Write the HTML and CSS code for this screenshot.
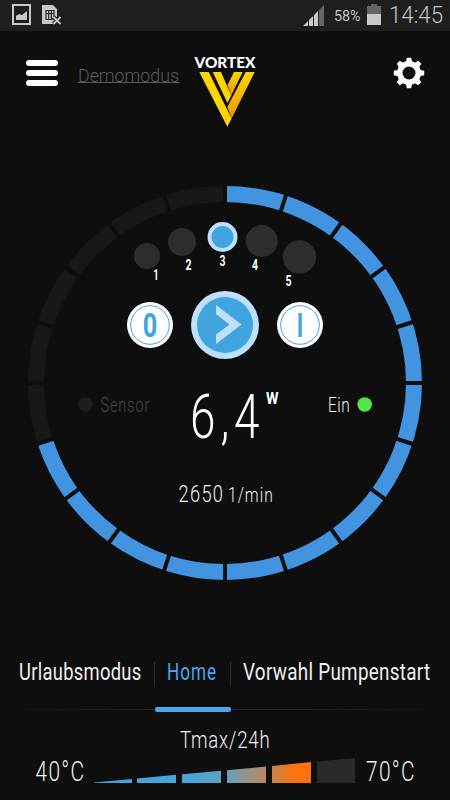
FILE: index.html
```html
<!DOCTYPE html>
<html lang="de">
<head>
<meta charset="utf-8">
<meta name="viewport" content="width=device-width, initial-scale=1">
<title>Vortex</title>
<link rel="stylesheet" href="styles.css">
</head>
<body>
<div class="app">
  <div class="statusbar">
    <div class="status-left">
      <svg width="19" height="21" viewBox="0 0 19 21"><rect x="1" y="1" width="17" height="19" fill="none" stroke="#c8c8c8" stroke-width="2"/><path d="M4 16v-4l3-2 3 1 5-4v9z" fill="#c8c8c8"/></svg>
      <svg width="20" height="21" viewBox="0 0 20 21"><path d="M0 1h11l4 4v8l-4 7H0z" fill="#c8c8c8"/><path d="M4 6.500h8v9H4zM4 9.500h8M6.700 6.500v9M9.400 6.500v9" fill="none" stroke="#2a2a2a" stroke-width="1.200"/><path d="M11.500 13l7 7M18.500 13l-7 7" stroke="#1e1e1e" stroke-width="4"/><path d="M11.500 13l7 7M18.500 13l-7 7" stroke="#c8c8c8" stroke-width="1.800"/></svg>
    </div>
    <div class="status-right">
      <svg width="22" height="21" viewBox="0 0 22 21"><path d="M0 21L5 16v5zM6 15l4-4v10H6zM11 10l4-4v15h-4z" fill="#c8c8c8"/><path d="M16 5l5-5v21h-5z" fill="#666"/></svg>
      <svg class="pct" width="28" height="16"><text x="0" y="13" font-size="14.500" textLength="26.500" lengthAdjust="spacingAndGlyphs">58%</text></svg>
      <svg class="battery" width="14" height="21" viewBox="0 0 14 21"><path d="M0 2h4V0h6v2h4v8H0z" fill="#666"/><path d="M0 10h14v11H0z" fill="#c8c8c8"/></svg>
      <svg class="clock" width="54" height="22"><text x="0" y="19" font-size="23.500" textLength="54" lengthAdjust="spacingAndGlyphs">14:45</text></svg>
    </div>
  </div>
  <header class="header">
    <svg class="menu" width="32" height="26" viewBox="0 0 32 26"><g fill="#fff"><rect width="32" height="6" rx="3"/><rect y="10" width="32" height="6" rx="3"/><rect y="20" width="32" height="6" rx="3"/></g></svg>
    <svg class="demo" width="102" height="24"><text x="0" y="17.500" font-size="18.500" textLength="101" lengthAdjust="spacingAndGlyphs">Demomodus</text><rect x="-.5" y="18" width="102" height="1"/></svg>
    <svg class="logo" width="64" height="72" viewBox="0 0 64 72">
      <defs><linearGradient id="gold" x1="0" y1="0" x2="0" y2="1"><stop offset="0" stop-color="#ffd400"/><stop offset="1" stop-color="#e39a00"/></linearGradient></defs>
      <text class="brand" x="1.500" y="12.500" font-size="15.500" textLength="61" lengthAdjust="spacingAndGlyphs">VORTEX</text>
      <path d="M52.700 17h9L38.600 63.500 34.300 52z" fill="url(#gold)"/><path d="M41 17h8.700L38.200 40.500 34.500 30z" fill="url(#gold)"/>
      <path d="M6.300 17h9.400l22.900 46.500-4.300 8.200zM19.700 17h8.300l10.200 23.500-3.700 7.500z" fill="#ffd400"/>
    </svg>
    <svg class="gear" width="32" height="32" viewBox="-16 -16 32 32"><circle r="9.200" fill="none" stroke="#fff" stroke-width="5.400"/><g fill="#fff"><path id="tooth" d="M-3.200-10.500l1-4.700h4.400l1 4.700z"/><use href="#tooth" transform="rotate(45)"/><use href="#tooth" transform="rotate(90)"/><use href="#tooth" transform="rotate(135)"/><use href="#tooth" transform="rotate(180)"/><use href="#tooth" transform="rotate(225)"/><use href="#tooth" transform="rotate(270)"/><use href="#tooth" transform="rotate(315)"/></g></svg>
  </header>
  <main class="dial">
    <svg width="450" height="450" viewBox="0 158 450 450">
      <g transform="translate(225 383)">
        <circle r="189" fill="none" stroke="#171717" stroke-width="16"/>
        <circle r="189" fill="none" stroke="#4294e1" stroke-width="16" pathLength="360" stroke-dasharray="252 108" transform="rotate(-90)"/>
        <g stroke="#0e0e0e" stroke-width="4"><path id="cut" d="M0-199V199"/><use href="#cut" transform="rotate(18)"/><use href="#cut" transform="rotate(36)"/><use href="#cut" transform="rotate(54)"/><use href="#cut" transform="rotate(72)"/><use href="#cut" transform="rotate(90)"/><use href="#cut" transform="rotate(108)"/><use href="#cut" transform="rotate(126)"/><use href="#cut" transform="rotate(144)"/><use href="#cut" transform="rotate(162)"/></g>
      </g>
      <g fill="#2d2d2d"><circle cx="147" cy="256" r="13"/><circle cx="182" cy="242" r="14"/><circle cx="261.700" cy="241" r="16"/><circle cx="299.500" cy="257" r="16.700"/></g>
      <circle cx="222.500" cy="237" r="15" fill="#bfdfff"/><circle cx="222.500" cy="237" r="11" fill="#41a4df"/>
      <g class="steps" font-size="14">
        <text x="153.300" y="280" textLength="5.500" lengthAdjust="spacingAndGlyphs">1</text>
        <text x="185.500" y="269.500" textLength="6" lengthAdjust="spacingAndGlyphs">2</text>
        <text x="219.500" y="266" textLength="6" lengthAdjust="spacingAndGlyphs">3</text>
        <text x="252" y="270" textLength="6" lengthAdjust="spacingAndGlyphs">4</text>
        <text x="285.500" y="285.500" textLength="6" lengthAdjust="spacingAndGlyphs">5</text>
      </g>
      <circle cx="225" cy="325" r="34" fill="#bfdfff"/><circle cx="225" cy="325" r="28" fill="#41a4df"/>
      <path d="M216 305l25.500 19.500L216 344v-9.500l13.500-10L216 314z" fill="#bfdfff"/>
      <g fill="#fff"><circle cx="150" cy="325" r="23"/><circle cx="300" cy="325" r="23"/></g>
      <g fill="none" stroke="#41a4df"><circle cx="150" cy="325" r="19.300"/><circle cx="300" cy="325" r="19.300"/></g>
      <g class="switch" font-size="33.500"><text x="142.700" y="337" textLength="14.500" lengthAdjust="spacingAndGlyphs">0</text><text x="296.700" y="337" textLength="6.500" lengthAdjust="spacingAndGlyphs">I</text></g>
      <circle cx="85.300" cy="404.500" r="7.300" fill="#1d1d1d"/>
      <text class="thin dim" transform="translate(100.500 411.500) scale(.74 1)" font-size="19.500" textLength="66" lengthAdjust="spacing">Sensor</text>
      <text class="thin big" transform="translate(190 437.500) scale(.74 1)" font-size="62" textLength="94" lengthAdjust="spacing">6,4</text>
      <text class="unit" transform="translate(266 404) scale(.84 1)" font-size="17">W</text>
      <text class="thin" transform="translate(328 411.500) scale(.79 1)" font-size="19.500" textLength="27.500" lengthAdjust="spacing">Ein</text>
      <circle cx="364.700" cy="404.500" r="7.300" fill="#53e64b"/>
      <text class="thin" transform="translate(178.500 502) scale(.76 1)" font-size="24" textLength="58.500" lengthAdjust="spacing">2650</text>
      <text class="thin" transform="translate(228 502) scale(.8 1)" font-size="19.500" textLength="56" lengthAdjust="spacing">1/min</text>
    </svg>
  </main>
  <nav class="tabs">
    <div class="tab"><svg width="154" height="40"><text transform="translate(19 24) scale(.75 1)" font-size="24.500" textLength="163" lengthAdjust="spacing">Urlaubsmodus</text></svg></div>
    <div class="tab active"><svg width="76" height="40"><text transform="translate(13 24) scale(.7 1)" font-size="24.500" textLength="70" lengthAdjust="spacing">Home</text></svg></div>
    <div class="tab"><svg width="219" height="40"><text transform="translate(13 24) scale(.77 1)" font-size="24.500" textLength="243" lengthAdjust="spacing">Vorwahl Pumpenstart</text></svg></div>
  </nav>
  <footer class="temperature">
    <svg class="thin" width="92" height="26"><text transform="translate(1 18) scale(.76 1)" font-size="24.500" textLength="118" lengthAdjust="spacing">Tmax/24h</text></svg>
    <div class="range">
      <svg class="thin" width="50" height="28"><text transform="translate(1.500 23) scale(.76 1)" font-size="27.500" textLength="64" lengthAdjust="spacing">40°C</text></svg>
      <svg width="262" height="26" viewBox="94 758 262 26">
        <defs><linearGradient id="heat" gradientUnits="userSpaceOnUse" x1="94" y1="0" x2="311" y2="0"><stop offset="0" stop-color="#41a4df"/><stop offset=".42" stop-color="#46a4d8"/><stop offset=".6" stop-color="#60a0c2"/><stop offset=".8" stop-color="#c08658"/><stop offset=".92" stop-color="#fa730f"/><stop offset="1" stop-color="#fa730f"/></linearGradient></defs>
        <path d="M94 783v-.5l38-3.500v4zM137 783v-4.500l39-3.700v8.200zM182 783v-8.700l39-3.500v12.200zM227 783v-12.800l39-3.700v16.500zM272 783v-17l39-4v21z" fill="url(#heat)"/><path d="M317 783v-21.500l38-3.500v25z" fill="#292929"/>
      </svg>
      <svg class="thin" width="50" height="28"><text transform="translate(0 23) scale(.76 1)" font-size="27.500" textLength="64" lengthAdjust="spacing">70°C</text></svg>
    </div>
  </footer>
</div>
</body>
</html>
```
FILE: styles.css
```css
* { box-sizing: border-box; }
body { margin: 0; background: #0e0e0e; font-family: Roboto, "Liberation Sans", sans-serif; }
svg { display: block; flex: none; overflow: visible; }
.app { width: 450px; height: 800px; overflow: hidden; display: flex; flex-direction: column; background: #0e0e0e; }
.statusbar { height: 31px; flex: none; background: #1e1e1e; display: flex; justify-content: space-between; padding: 4px 7px 0 12px; }
.status-left { display: flex; gap: 11px; }
.status-right { display: flex; fill: #c4c4c4; }
.status-right > svg:first-child { margin: 1px 9px 0 0; }
.pct { margin: 4px 5px 0 0; }
.battery { margin-right: 8px; }
.clock { font-weight: 350; }
.header { height: 127px; flex: none; display: flex; padding: 0 26px; }
.menu { margin-top: 29px; }
.demo { margin: 33px 0 0 20px; fill: #5a5a5a; font-weight: 350; }
.logo { margin: 24px 0 0 13px; }
.brand { font-family: Lato, sans-serif; font-weight: 900; fill: #fff; }
.gear { margin: 26px -1px 0 auto; }
.dial { height: 450px; flex: none; }
.thin { font-weight: 300; fill: #f0f0f0; }
.dim { fill: #464646; }
.big { fill: #fff; }
.steps, .unit { font-weight: 700; fill: #fff; }
.switch { font-weight: 700; fill: #41a4df; }
.tabs { flex: none; height: 104px; padding-top: 48px; display: flex; background: linear-gradient(90deg, #0e0e0e, #252525 35%, #252525 65%, #0e0e0e) 0 101px / 100% 1px no-repeat; }
.tab { height: 56px; fill: #f0f0f0; }
.tab + .tab { background: linear-gradient(#2a2a2a, #2a2a2a) 0 6px / 1px 25px no-repeat; }
.tab.active { fill: #4aa8ea; position: relative; }
.tab.active::after { content: ""; position: absolute; left: 1px; bottom: 0; width: 76px; height: 5px; border-radius: 2px; background: #4aa8ea; }
.temperature { flex: 1; padding-top: 18px; display: flex; flex-direction: column; align-items: center; }
.range { display: flex; gap: 10px; margin-top: 2px; }
```
